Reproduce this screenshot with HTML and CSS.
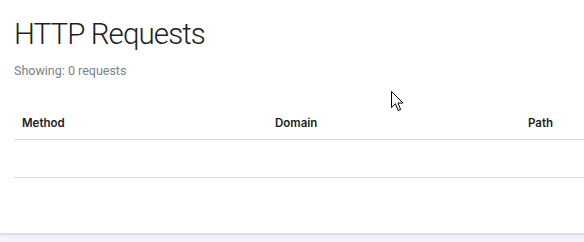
FILE: index.html
```html
<!DOCTYPE html>
<html>
<head>
<meta charset="utf-8">
<link rel="stylesheet" href="styles.css">
</head>
<body>
<div class="card">
  <h1 class="title">HTTP Requests</h1>
  <p class="subtitle">Showing: 0 requests</p>
  <table class="table">
    <thead>
      <tr><th>Method</th><th>Domain</th><th>Path</th></tr>
    </thead>
    <tbody>
      <tr class="empty"><td colspan="3"></td></tr>
    </tbody>
  </table>
</div>
<svg class="cursor" width="13" height="21" viewBox="0 0 13 21"><path d="M0.5 0.5 L0.5 16.5 L4.5 12.8 L7.2 19.5 L9.6 18.5 L7 12 L12 12 Z" fill="#fff" stroke="#000" stroke-width="1"/></svg>
</body>
</html>
```
FILE: styles.css
```css
html, body { margin: 0; padding: 0; }
body {
  background: #f3f4f8;
  overflow: hidden;
  width: 584px;
  height: 242px;
  position: relative;
  font-family: Roboto, "Noto Sans", sans-serif;
}
.card {
  background: #fff;
  width: 800px;
  height: 233px;
  box-shadow: 0 1px 3px rgba(60, 70, 110, 0.25);
  padding: 14px 0 0 14px;
  box-sizing: border-box;
}
.title {
  margin: 0;
  font-family: Roboto, sans-serif;
  font-weight: 300;
  font-size: 29.5px;
  letter-spacing: -0.9px;
  line-height: 40px;
  color: #1e1e24;
}
.subtitle {
  margin: 9px 0 0 0;
  font-size: 12.5px;
  line-height: 16px;
  color: #7a7f87;
}
.table {
  margin-top: 27px;
  border-collapse: collapse;
  width: 759px;
  table-layout: fixed;
}
.table th {
  text-align: left;
  font-family: Inter, Roboto, sans-serif;
  font-weight: 600;
  font-size: 11.5px;
  color: #1c1c28;
  padding: 7px 8px 6px 8px;
  height: 20px;
  border-bottom: 1px solid #dcdbe4;
}
.table td {
  height: 37px;
  padding: 0;
  border-bottom: 1px solid #dcdbe4;
}
.cursor {
  position: absolute;
  left: 391px;
  top: 91px;
}
```
